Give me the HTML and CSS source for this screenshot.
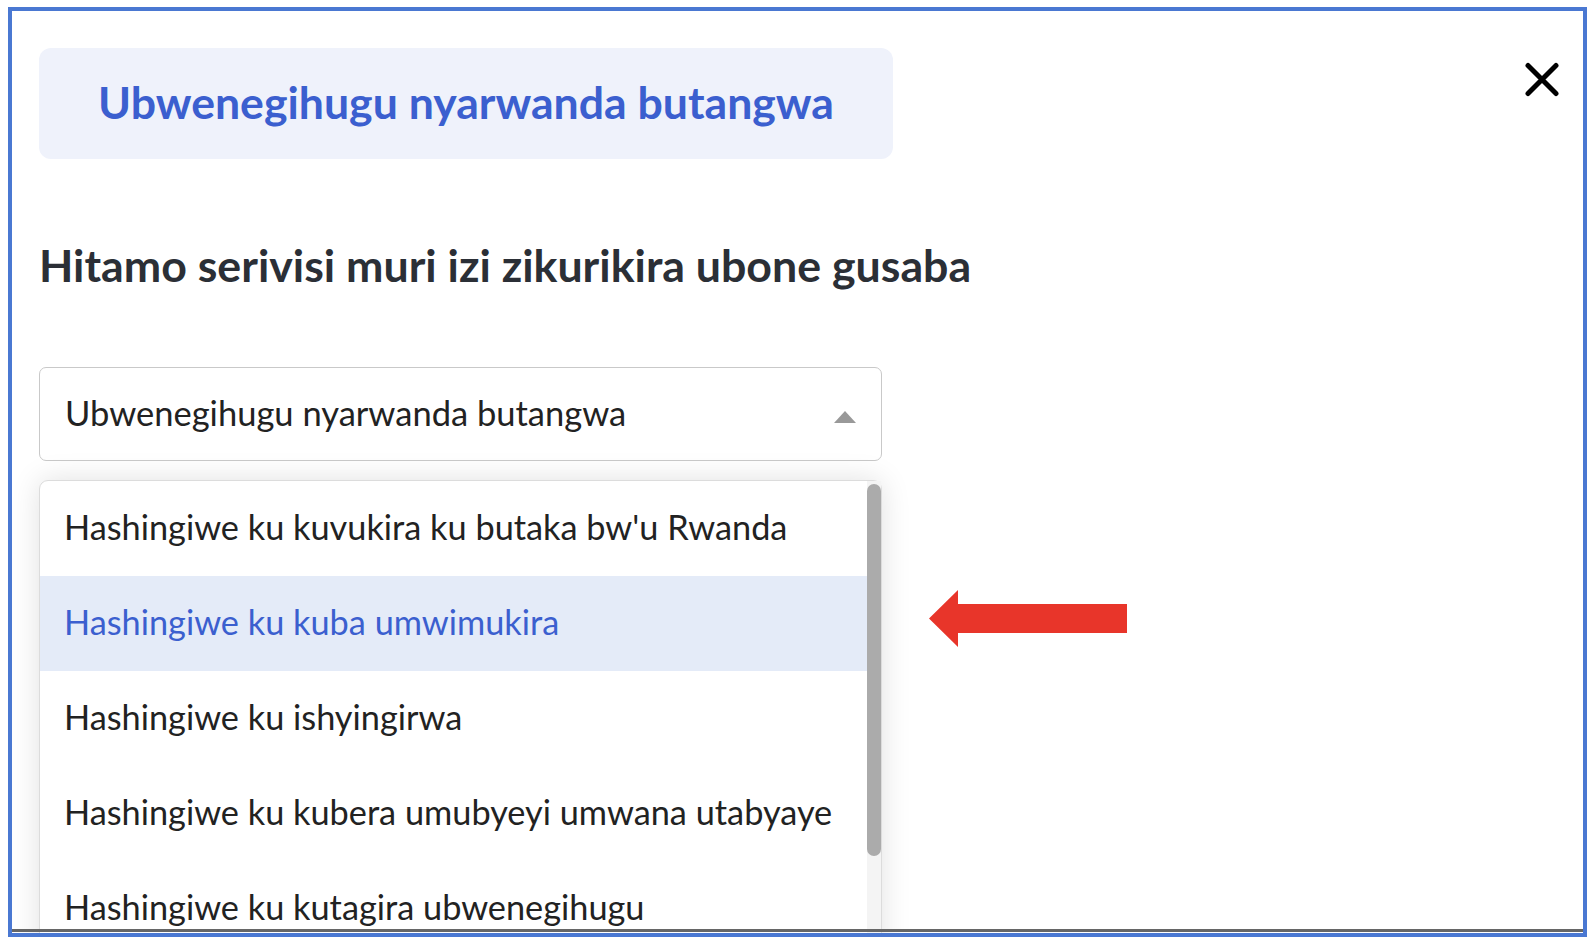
FILE: index.html
```html
<!DOCTYPE html>
<html lang="en">
<head>
    <meta charset="UTF-8">
    <meta name="viewport" content="width=device-width, initial-scale=1.0">
    <title>Ubwenegihugu nyarwanda butangwa</title>
    <link rel="stylesheet" href="styles.css">
</head>
<body>
<div class="frame">
    <div class="modal">
        <div class="modal-head">
            <div class="banner">Ubwenegihugu nyarwanda butangwa</div>
            <button class="close-btn" aria-label="Close">
                <svg width="34" height="35" viewBox="0 0 34 35"><path d="M3 3.5 L31 31.5 M31 3.5 L3 31.5" stroke="#000" stroke-width="5" stroke-linecap="round"/></svg>
            </button>
        </div>

        <h2 class="question">Hitamo serivisi muri izi zikurikira ubone gusaba</h2>

        <!-- Selected service -->
        <div class="select">
            <span>Ubwenegihugu nyarwanda butangwa</span>
            <span class="caret"></span>
        </div>

        <!-- Open option list -->
        <div class="dropdown">
            <ul class="options">
                <li>Hashingiwe ku kuvukira ku butaka bw'u Rwanda</li>
                <li class="active">Hashingiwe ku kuba umwimukira</li>
                <li>Hashingiwe ku ishyingirwa</li>
                <li>Hashingiwe ku kubera umubyeyi umwana utabyaye</li>
                <li>Hashingiwe ku kutagira ubwenegihugu</li>
            </ul>
            <div class="scrollbar"><div class="thumb"></div></div>
        </div>
    </div>

    <!-- Annotation arrow -->
    <svg class="pointer" width="198" height="58" viewBox="0 0 198 58"><path d="M0 28.5 L29 0 L29 14 L198 14 L198 43 L29 43 L29 57 Z" fill="#e8352a"/></svg>
    <div class="bottom-line"></div>
</div>
</body>
</html>
```

FILE: styles.css
```css
body {
    margin: 0;
    background-color: #fff;
    font-family: "Lato", "Open Sans", sans-serif;
}

.frame {
    position: relative;
    box-sizing: border-box;
    width: 1579px;
    height: 930px;
    margin: 7px 0 0 8px;
    border: 4px solid #4a78d2;
    overflow: hidden;
}

.modal {
    padding: 37px 24px 0 27px;
}

.modal-head {
    display: flex;
    justify-content: space-between;
    align-items: flex-start;
}

.banner {
    box-sizing: border-box;
    width: 854px;
    height: 111px;
    padding-bottom: 4px;
    display: flex;
    align-items: center;
    justify-content: center;
    background-color: #eff2fb;
    border-radius: 12px;
    color: #3b5fcf;
    font-size: 44.6px;
    font-weight: 700;
}

.close-btn {
    margin-top: 14px;
    padding: 0;
    border: none;
    background: none;
    line-height: 0;
    cursor: pointer;
}

.question {
    margin: 79px 0 0;
    font-size: 44.7px;
    font-weight: 700;
    line-height: 54px;
    color: #2b2f36;
}

.select {
    box-sizing: border-box;
    width: 843px;
    height: 94px;
    margin-top: 75px;
    padding: 0 25px 4px 25px;
    display: flex;
    align-items: center;
    justify-content: space-between;
    border: 1px solid #c9c9c9;
    border-radius: 7px;
    font-size: 34.5px;
    color: #222;
}

.caret {
    width: 0;
    height: 0;
    border-left: 11.5px solid transparent;
    border-right: 11.5px solid transparent;
    border-bottom: 12px solid #999;
    margin-top: 10px;
}

.dropdown {
    box-sizing: border-box;
    width: 843px;
    height: 520px;
    margin-top: 19px;
    display: flex;
    border: 1px solid #dcdcdc;
    border-radius: 9px 9px 0 0;
    box-shadow: 0 0 30px rgba(0, 0, 0, 0.12);
    background-color: #fff;
}

.options {
    flex: 1;
    margin: 0;
    padding: 0;
    list-style: none;
}

.options li {
    box-sizing: border-box;
    height: 95px;
    padding: 0 0 4px 24px;
    display: flex;
    align-items: center;
    font-size: 34.3px;
    color: #222;
}

.options li.active {
    background-color: #e4ebf8;
    color: #3b5fcf;
}

.scrollbar {
    width: 14px;
    padding-top: 3px;
    background-color: #f4f4f4;
}

.thumb {
    height: 372px;
    border-radius: 7px;
    background-color: #ababab;
}

.pointer {
    position: absolute;
    left: 917px;
    top: 579px;
}

.bottom-line {
    position: absolute;
    left: 0;
    right: 0;
    bottom: 1px;
    height: 3px;
    background-color: #666;
}
```
